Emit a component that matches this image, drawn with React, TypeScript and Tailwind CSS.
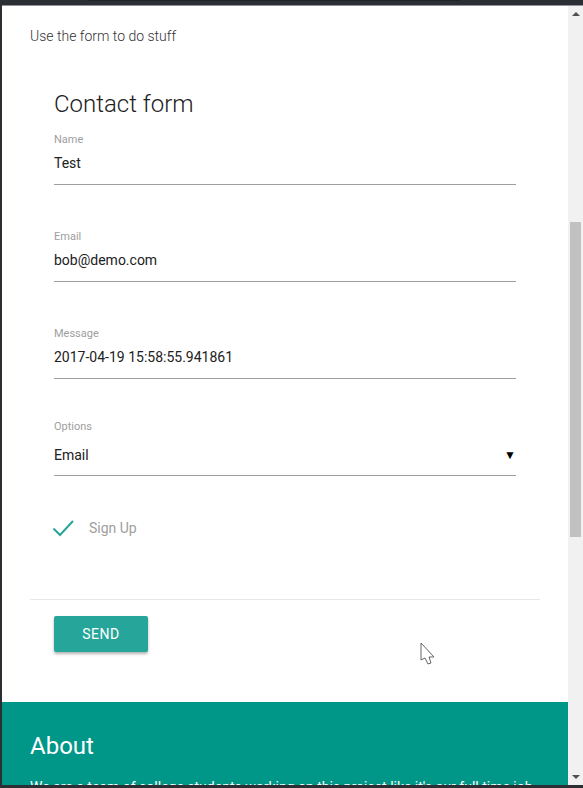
import React from "react";

function Field({ label, value, gapTop, labelGap, pb, select }: { label: string; value: string; gapTop: string; labelGap: string; pb: string; select?: boolean }) {
  return (
    <div className={gapTop}>
      <div className="text-[11px] leading-[14px] text-[#9e9e9e]">{label}</div>
      <div className={`${labelGap} ${pb} flex items-center justify-between border-b border-[#9e9e9e]`}>
        <span className="text-[14px] leading-[20px] text-[#212121]">{value}</span>
        {select && <span className="text-[12px] leading-[20px] text-black">▼</span>}
      </div>
    </div>
  );
}

export default function App() {
  return (
    <div
      className="relative flex h-[788px] w-[583px] flex-col overflow-hidden bg-[#2b2e33] pb-[3px] pl-[2px] pt-[5px]"
      style={{ fontFamily: "Roboto, 'Noto Sans', sans-serif" }}
    >
      <div className="absolute left-[88px] top-0 h-[1px] w-[372px] bg-[#1f2226]" />
      <div className="h-[1px] bg-[#8f9297]" />
      <div className="flex min-h-0 flex-1">
        <main className="relative flex min-w-0 flex-1 flex-col overflow-hidden bg-white">
          <div className="px-[28px] pt-[20px]">
            <p className="text-[14px] font-light leading-[20px] text-[#333]">Use the form to do stuff</p>
            <div className="px-[24px]">
              <h2 className="mt-[42px] text-[24px] font-light leading-[32px] text-[#212121]">Contact form</h2>
              <Field label="Name" value="Test" gapTop="mt-[13px]" labelGap="mt-[6px]" pb="pb-[11px]" />
              <Field label="Email" value="bob@demo.com" gapTop="mt-[45px]" labelGap="mt-[6px]" pb="pb-[11px]" />
              <Field label="Message" value="2017-04-19 15:58:55.941861" gapTop="mt-[45px]" labelGap="mt-[6px]" pb="pb-[11px]" />
              <Field label="Options" value="Email" gapTop="mt-[41px]" labelGap="mt-[11px]" pb="pb-[10px]" select />
              <div className="mt-[42px] flex h-[20px] items-center">
                <svg width="24" height="20" viewBox="0 0 24 20" className="-ml-[2px]">
                  <path d="M1.5 10.5 L8 17 L21 3" fill="none" stroke="#26a69a" strokeWidth="2" />
                </svg>
                <span className="ml-[13px] text-[14px] leading-[20px] text-[#9e9e9e]">Sign Up</span>
              </div>
            </div>
            <div className="mt-[61px] h-[1px] bg-[#e8e8e8]" />
            <div className="px-[24px] pt-[16px]">
              <button className="h-[36px] w-[94px] rounded-[2px] bg-[#26a69a] text-[14px] uppercase tracking-[0.5px] text-white shadow-[0_2px_3px_rgba(0,0,0,0.3)]">
                Send
              </button>
            </div>
          </div>
          <section className="mt-[50px] flex-1 bg-[#009688] px-[28px] pt-[28px] text-white">
            <h2 className="text-[24px] leading-[32px]">About</h2>
            <p className="mt-[14px] whitespace-nowrap text-[14px] leading-[22px]">
              We are a team of college students working on this project like it's our full time job.
            </p>
          </section>
          <svg className="absolute left-[418px] top-[636px]" width="18" height="26" viewBox="0 0 18 26">
            <path d="M1 1 L1 18 L5 16 L8 22 L11 21 L9 15 L14 15 Z" fill="#fff" stroke="#666" strokeWidth="1" strokeLinejoin="round" />
          </svg>
        </main>
        <div className="flex w-[15px] flex-col items-center bg-[#f1f1f1]">
          <div className="mt-[6px] h-0 w-0 border-x-[4px] border-b-[4px] border-x-transparent border-b-[#505050]" />
          <div className="mt-[206px] h-[315px] w-[11px] bg-[#c1c1c1]" />
          <div className="flex-1" />
          <div className="mb-[6px] h-0 w-0 border-x-[4px] border-t-[4px] border-x-transparent border-t-[#505050]" />
        </div>
      </div>
    </div>
  );
}
